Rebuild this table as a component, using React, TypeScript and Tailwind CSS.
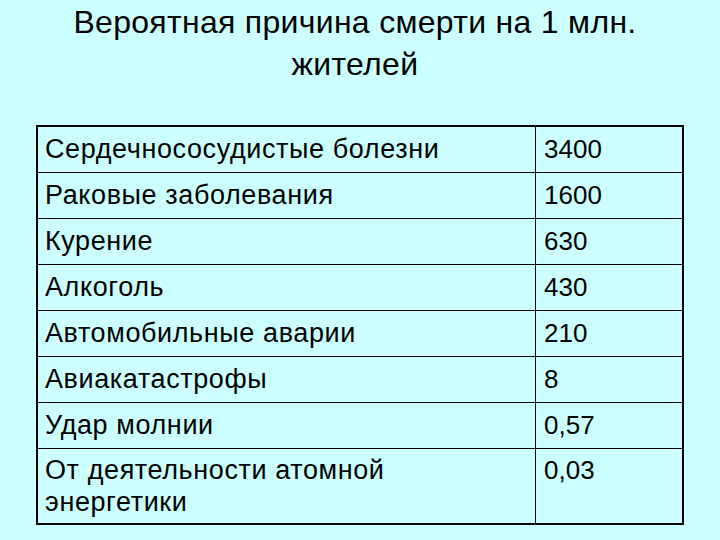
import React from 'react';

const rows: [string, string][] = [
  ['Сердечнососудистые болезни', '3400'],
  ['Раковые заболевания', '1600'],
  ['Курение', '630'],
  ['Алкоголь', '430'],
  ['Автомобильные аварии', '210'],
  ['Авиакатастрофы', '8'],
  ['Удар молнии', '0,57'],
];

const App: React.FC = () => {
  return (
    <div className="w-[720px] h-[540px] bg-[#ccffff] overflow-hidden font-['Liberation_Sans',Arial,sans-serif] text-black">
      <h1 className="pt-px pr-[10px] text-center text-[32px] leading-[42px] tracking-[0.3px] font-normal h-[125px]">
        Вероятная причина смерти на 1 млн.
        <br />
        жителей
      </h1>
      <div className="w-[648px] mx-auto border-2 border-black text-[26px] leading-[32px]">
        {rows.map(([name, value], i) => (
          <div
            key={name}
            className={`grid grid-cols-[498px_1fr] ${i > 0 ? 'h-[46px] border-t border-black' : 'h-[45px]'}`}
          >
            <div className="pl-[7px] pt-[6px] border-r border-black whitespace-nowrap text-[27px] tracking-[0.6px]">{name}</div>
            <div className="pl-[8px] pt-[6px]">{value}</div>
          </div>
        ))}
        <div className="grid grid-cols-[498px_1fr] h-[75px] border-t border-black">
          <div className="pl-[7px] pt-[5px] border-r border-black text-[27px] tracking-[0.6px]">
            От деятельности атомной
            <br />
            энергетики
          </div>
          <div className="pl-[8px] pt-[5px]">0,03</div>
        </div>
      </div>
    </div>
  );
};

export default App;
